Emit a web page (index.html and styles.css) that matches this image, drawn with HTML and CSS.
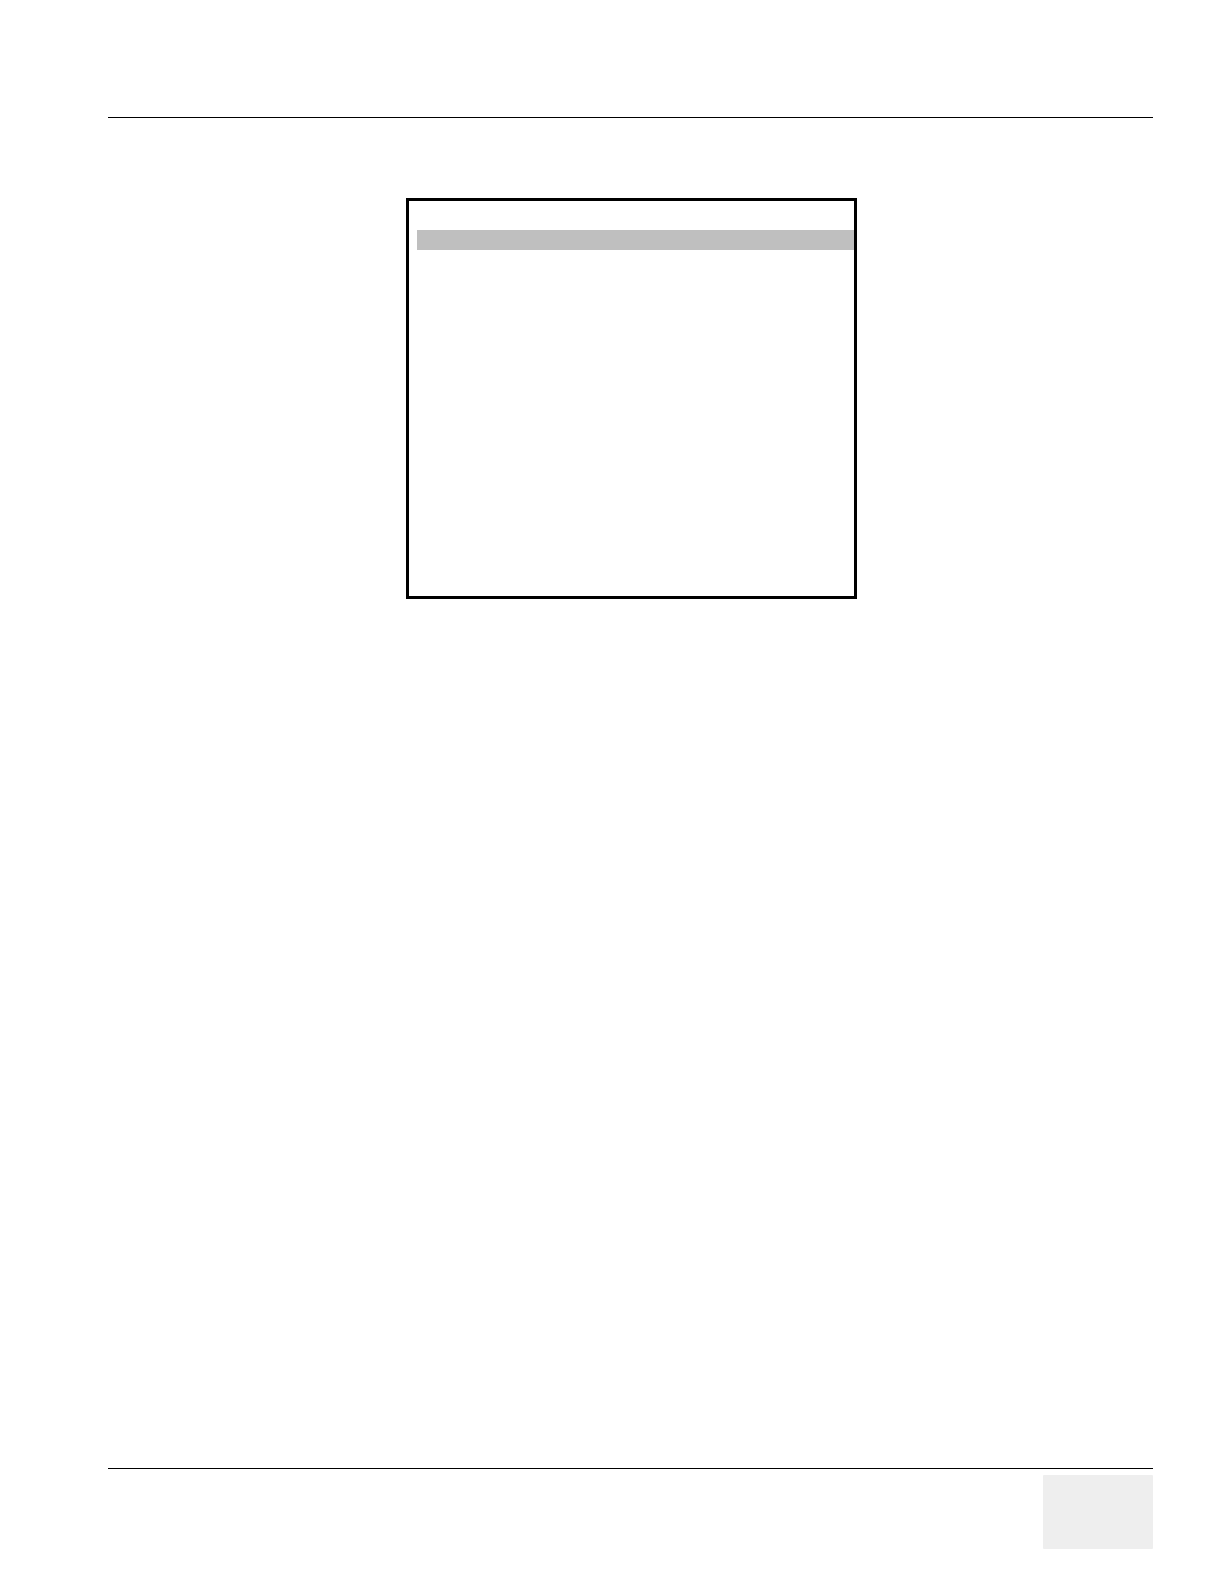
FILE: index.html
```html
<!DOCTYPE html>
<html lang="en">
<head>
  <meta charset="utf-8">
  <meta name="viewport" content="width=device-width, initial-scale=1">
  <title>Manual page</title>
  <link rel="stylesheet" href="styles.css">
</head>
<body>
  <div class="page">
    <header class="page-header"></header>
    <main class="content">
      <div class="panel">
        <div class="panel-row"></div>
      </div>
    </main>
    <footer class="page-footer">
      <div class="page-number"></div>
    </footer>
  </div>
</body>
</html>
```

FILE: styles.css
```css
* {
  box-sizing: border-box;
}

body {
  margin: 0;
  background: #fff;
  font-family: "Liberation Sans", sans-serif;
}

.page {
  display: flex;
  flex-direction: column;
  min-height: 100vh;
  padding: 0 71px 35px 108px;
}

.page-header {
  padding-top: 117px;
  border-bottom: 1px solid #000;
}

.content {
  flex: 1;
  padding: 80px 0 80px 2px;
}

.panel {
  width: 100%;
  max-width: 451px;
  min-height: 401px;
  margin: 0 auto;
  padding: 29px 0 0 8px;
  border: 3px solid #000;
}

.panel-row {
  height: 20px;
  background: #bfbfbf;
}

.page-footer {
  display: flex;
  justify-content: flex-end;
  padding-top: 6px;
  border-top: 1px solid #000;
}

.page-number {
  width: 110px;
  height: 74px;
  border-radius: 1px;
  background: #eee;
}
```
